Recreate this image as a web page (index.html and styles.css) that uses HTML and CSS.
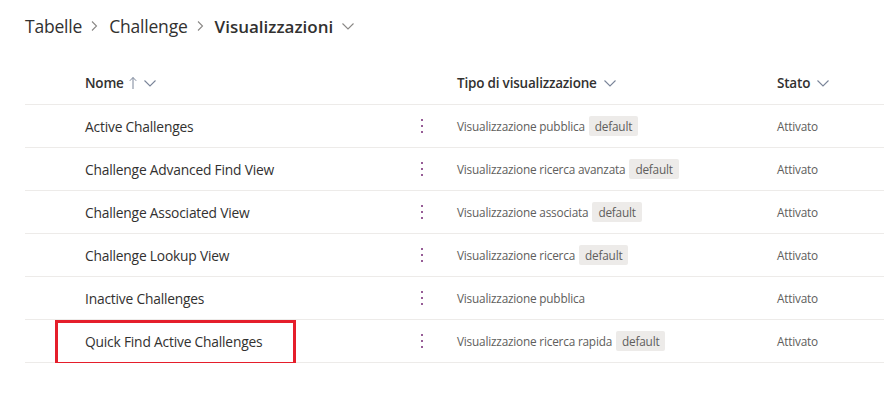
FILE: index.html
```html
<!DOCTYPE html>
<html lang="it">
<head>
<meta charset="utf-8">
<link rel="stylesheet" href="styles.css">
</head>
<body>
<div class="page">
  <nav class="crumbs">
    <span class="crumb">Tabelle</span>
    <svg class="sep" width="12" height="12" viewBox="0 0 12 12"><path d="M4 1.5 L8.5 6 L4 10.5" fill="none" stroke="#8a8886" stroke-width="1.1"/></svg>
    <span class="crumb">Challenge</span>
    <svg class="sep" width="12" height="12" viewBox="0 0 12 12"><path d="M4 1.5 L8.5 6 L4 10.5" fill="none" stroke="#8a8886" stroke-width="1.1"/></svg>
    <span class="crumb current">Visualizzazioni</span>
    <svg class="drop" width="14" height="14" viewBox="0 0 14 14"><path d="M1.5 4.5 L7 10 L12.5 4.5" fill="none" stroke="#8a8886" stroke-width="1.1"/></svg>
  </nav>

  <div class="grid">
    <div class="row head">
      <div></div>
      <div class="hcell">Nome <svg class="arrow" width="8" height="14" viewBox="0 0 8 14"><path d="M4 13 V1.5 M0.8 4.8 L4 1.5 L7.2 4.8" fill="none" stroke="#7a8599" stroke-width="1"/></svg><svg class="chev" width="14" height="14" viewBox="0 0 14 14"><path d="M1.5 4.5 L7 10 L12.5 4.5" fill="none" stroke="#7a8599" stroke-width="1.1"/></svg></div>
      <div></div>
      <div class="hcell">Tipo di visualizzazione <svg class="chev" width="14" height="14" viewBox="0 0 14 14"><path d="M1.5 4.5 L7 10 L12.5 4.5" fill="none" stroke="#7a8599" stroke-width="1.1"/></svg></div>
      <div class="hcell">Stato <svg class="chev" width="14" height="14" viewBox="0 0 14 14"><path d="M1.5 4.5 L7 10 L12.5 4.5" fill="none" stroke="#7a8599" stroke-width="1.1"/></svg></div>
    </div>

    <div class="row">
      <div></div>
      <div class="name">Active Challenges</div>
      <div class="more"><span></span><span></span><span></span></div>
      <div class="type">Visualizzazione pubblica <span class="badge">default</span></div>
      <div class="state">Attivato</div>
    </div>
    <div class="row">
      <div></div>
      <div class="name">Challenge Advanced Find View</div>
      <div class="more"><span></span><span></span><span></span></div>
      <div class="type">Visualizzazione ricerca avanzata <span class="badge">default</span></div>
      <div class="state">Attivato</div>
    </div>
    <div class="row">
      <div></div>
      <div class="name">Challenge Associated View</div>
      <div class="more"><span></span><span></span><span></span></div>
      <div class="type">Visualizzazione associata <span class="badge">default</span></div>
      <div class="state">Attivato</div>
    </div>
    <div class="row">
      <div></div>
      <div class="name">Challenge Lookup View</div>
      <div class="more"><span></span><span></span><span></span></div>
      <div class="type">Visualizzazione ricerca <span class="badge">default</span></div>
      <div class="state">Attivato</div>
    </div>
    <div class="row">
      <div></div>
      <div class="name">Inactive Challenges</div>
      <div class="more"><span></span><span></span><span></span></div>
      <div class="type">Visualizzazione pubblica</div>
      <div class="state">Attivato</div>
    </div>
    <div class="row highlighted">
      <div></div>
      <div class="name">Quick Find Active Challenges</div>
      <div class="more"><span></span><span></span><span></span></div>
      <div class="type">Visualizzazione ricerca rapida <span class="badge">default</span></div>
      <div class="state">Attivato</div>
      <div class="mark"></div>
    </div>
  </div>
</div>
</body>
</html>
```

FILE: styles.css
```css
html, body {
  margin: 0;
  padding: 0;
  background: #ffffff;
}
body {
  font-family: "Open Sans", "Noto Sans", sans-serif;
  color: #323130;
}
.page {
  padding: 13px 0 0 25px;
}
.crumbs {
  display: flex;
  align-items: center;
  height: 26px;
  font-size: 17.5px;
  letter-spacing: -0.2px;
}
.crumb {
  color: #323130;
}
.crumb.current {
  font-weight: 600;
  font-size: 17px;
  letter-spacing: 0;
}
.sep {
  margin: 0 9px 0 6px;
}
.drop {
  margin-left: 8px;
}
.grid {
  margin-top: 22px;
}
.row {
  position: relative;
  display: grid;
  grid-template-columns: 60px 335px 37px 320px 1fr;
  align-items: center;
  height: 42px;
  border-bottom: 1px solid #edebe9;
}
.row.head {
  height: 43px;
}
.hcell {
  display: flex;
  align-items: center;
  font-size: 13.5px;
  font-weight: 600;
  letter-spacing: -0.2px;
}
.arrow {
  margin-left: 5px;
}
.chev {
  margin-left: 6px;
}
.name {
  font-size: 13.8px;
  letter-spacing: -0.2px;
}
.more {
  display: flex;
  flex-direction: column;
  gap: 4px;
  padding-left: 1px;
}
.more span {
  width: 2px;
  height: 2px;
  border-radius: 1px;
  background: #742774;
}
.type {
  font-size: 11.8px;
  color: #605e5c;
  letter-spacing: -0.2px;
  display: flex;
  align-items: center;
}
.badge {
  background: #edebe9;
  color: #605e5c;
  padding: 2px 6px;
  margin-left: 4px;
  border-radius: 2px;
  line-height: 16px;
}
.state {
  font-size: 11.8px;
  color: #605e5c;
  letter-spacing: -0.2px;
}
.mark {
  position: absolute;
  left: 30px;
  top: 0;
  width: 235px;
  height: 39px;
  border: 3px solid #e51e2b;
  pointer-events: none;
  z-index: 2;
}
```
